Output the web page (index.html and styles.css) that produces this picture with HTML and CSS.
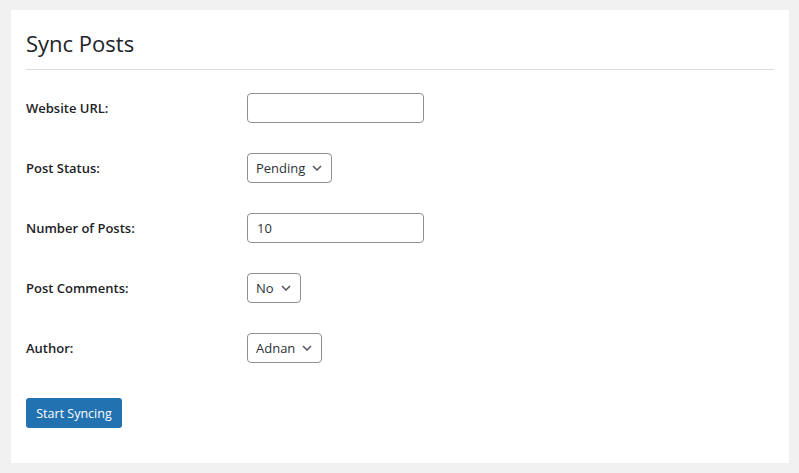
FILE: index.html
```html
<!DOCTYPE html>
<html lang="en">
<head>
<meta charset="utf-8">
<title>Sync Posts</title>
<link rel="stylesheet" href="styles.css">
</head>
<body>
<div class="card">
  <h1 class="title">Sync Posts</h1>
  <form class="form">
    <div class="rows">
      <label class="label" for="url">Website URL:</label>
      <div class="field"><input class="text-input" id="url" type="text"></div>

      <label class="label" for="status">Post Status:</label>
      <div class="field">
        <div class="select select-pending">
          <select id="status"><option>Pending</option></select>
          <svg class="chev" width="10" height="6" viewBox="0 0 10 6"><path d="M1 1l4 4 4-4" fill="none" stroke="#50575e" stroke-width="1.5"/></svg>
        </div>
      </div>

      <label class="label" for="num">Number of Posts:</label>
      <div class="field"><input class="text-input" id="num" type="text" value="10"></div>

      <label class="label" for="comments">Post Comments:</label>
      <div class="field">
        <div class="select select-no">
          <select id="comments"><option>No</option></select>
          <svg class="chev" width="10" height="6" viewBox="0 0 10 6"><path d="M1 1l4 4 4-4" fill="none" stroke="#50575e" stroke-width="1.5"/></svg>
        </div>
      </div>

      <label class="label" for="author">Author:</label>
      <div class="field">
        <div class="select select-author">
          <select id="author"><option>Adnan</option></select>
          <svg class="chev" width="10" height="6" viewBox="0 0 10 6"><path d="M1 1l4 4 4-4" fill="none" stroke="#50575e" stroke-width="1.5"/></svg>
        </div>
      </div>
    </div>
    <button class="button" type="button">Start Syncing</button>
  </form>
</div>
</body>
</html>
```
FILE: styles.css
```css
* { box-sizing: border-box; }
html, body { margin: 0; }
body {
  background: #f0f0f1;
  padding: 10px 10px 10px 11px;
  font-family: "Open Sans", "Noto Sans", sans-serif;
  color: #1d2327;
}
.card {
  background: #fff;
  padding: 0 15px 35px 15px;
  height: 453px;
}
.title {
  margin: 0;
  font-size: 22px;
  font-weight: 400;
  line-height: 31px;
  padding: 18px 0 10px;
  border-bottom: 1px solid #dcdcde;
  color: #1d2327;
}
.form { margin-top: 23px; }
.rows {
  display: grid;
  grid-template-columns: 221px 1fr;
  grid-auto-rows: 30px;
  row-gap: 30px;
  align-items: center;
}
.label {
  font-size: 13px;
  font-weight: 600;
  color: #1d2327;
}
.field { display: flex; align-items: center; }
.text-input {
  width: 177px;
  height: 30px;
  border: 1px solid #8c8f94;
  border-radius: 4px;
  padding: 0 9px;
  font-family: inherit;
  font-size: 13px;
  color: #2c3338;
  background: #fff;
  outline: none;
}
.select {
  position: relative;
  height: 30px;
}
.select select {
  appearance: none;
  -webkit-appearance: none;
  width: 100%;
  height: 30px;
  border: 1px solid #8c8f94;
  border-radius: 4px;
  padding: 0 20px 0 8px;
  font-family: inherit;
  font-size: 13px;
  color: #2c3338;
  background: #fff;
  outline: none;
}
.select-pending { width: 85px; }
.select-no { width: 54px; }
.select-author { width: 75px; }
.chev {
  position: absolute;
  right: 10px;
  top: 12px;
  pointer-events: none;
}
.button {
  margin-top: 35px;
  width: 96px;
  height: 30px;
  border: 0;
  border-radius: 3px;
  background: #2271b1;
  color: #fff;
  font-family: inherit;
  font-size: 12.5px;
  padding: 0;
}
```
